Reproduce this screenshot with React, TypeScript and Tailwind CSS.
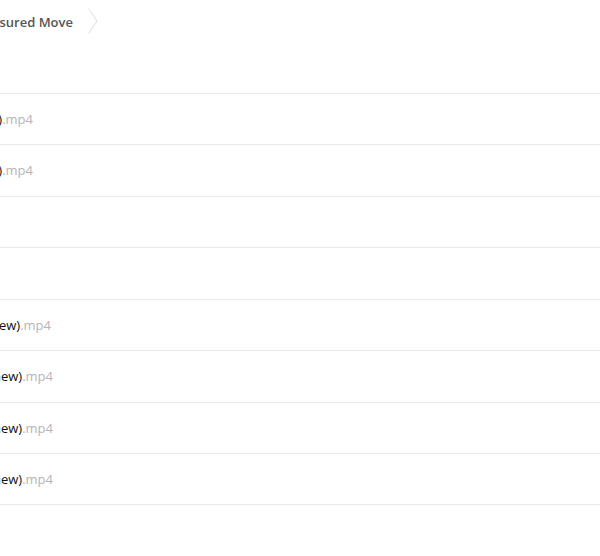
import React from "react";

const rows: { name: string; endX: number }[] = [
  { name: "Lesson 1 (Setup)", endX: 33 },
  { name: "Lesson 2 (Setup)", endX: 33 },
  { name: "", endX: 0 },
  { name: "", endX: 0 },
  { name: "Lesson 3 (Review)", endX: 51 },
  { name: "Lesson 4 (new)", endX: 53 },
  { name: "Lesson 5 (new)", endX: 53 },
  { name: "Lesson 6 (new)", endX: 53 },
];

export default function App() {
  return (
    <div
      className="w-[600px] h-[556px] bg-white overflow-hidden text-[13px]"
      style={{ fontFamily: '"Open Sans", "Liberation Sans", sans-serif' }}
    >
      <div className="h-[42px] flex items-center">
        <div className="w-[73px] flex justify-end pt-[3px]">
          <span className="whitespace-nowrap font-semibold text-[#555555]">
            Course · Measured Move
          </span>
        </div>
        <svg
          className="ml-[15px]"
          width="10"
          height="26"
          viewBox="0 0 10 26"
          fill="none"
        >
          <path d="M0.5 0.5 L9 13 L0.5 25.5" stroke="#dcdcdc" strokeWidth="1" />
        </svg>
      </div>
      <div className="h-[51px]" />
      <div className="flex flex-col">
        {rows.map((r, i) => (
          <div
            key={i}
            className={`${i % 2 === 0 ? "h-[51px]" : "h-[52px]"} border-t border-[#e9e9e9] flex items-center pt-[1px] last:border-b`}
          >
            {r.name && (
              <div className="flex justify-end" style={{ width: r.endX }}>
                <span className="whitespace-nowrap text-[#111111]">
                  {r.name}
                  <span className="text-[#b5b5b5]">.mp4</span>
                </span>
              </div>
            )}
          </div>
        ))}
      </div>
    </div>
  );
}
